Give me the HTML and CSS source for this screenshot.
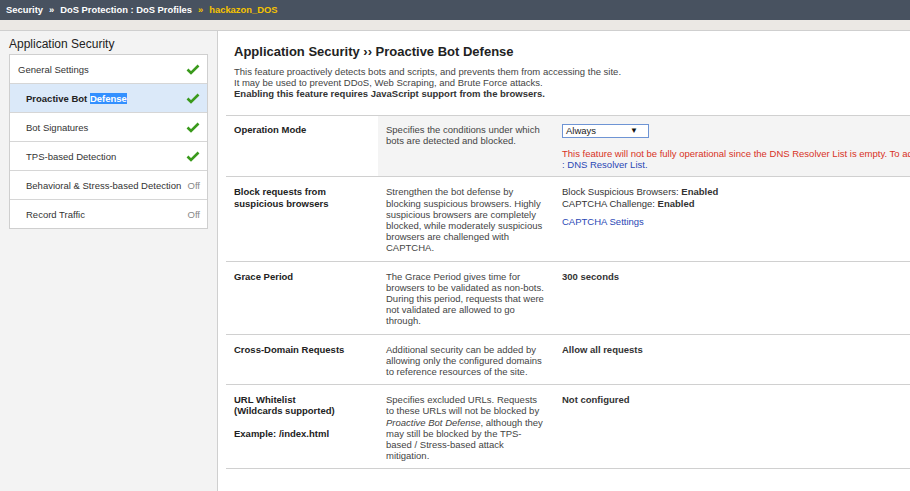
FILE: index.html
```html
<!DOCTYPE html>
<html>
<head>
<meta charset="utf-8">
<link rel="stylesheet" href="styles.css">
</head>
<body>
<div class="topbar">
  <span>Security</span><span class="sep">»</span><span>DoS Protection : DoS Profiles</span><span class="sep cur">»</span><span class="cur">hackazon_DOS</span>
</div>
<div class="band"></div>
<div class="layout">
  <aside class="sidebar">
    <h2 class="side-title">Application Security</h2>
    <ul class="nav">
      <li class="nav-item top"><span>General Settings</span><svg class="check" viewBox="0 0 14 11"><path d="M1.5 5.5 L5 9 L12.5 1.5" /></svg></li>
      <li class="nav-item sel"><span>Proactive Bot <span class="hl">Defense</span></span><svg class="check" viewBox="0 0 14 11"><path d="M1.5 5.5 L5 9 L12.5 1.5" /></svg></li>
      <li class="nav-item"><span>Bot Signatures</span><svg class="check" viewBox="0 0 14 11"><path d="M1.5 5.5 L5 9 L12.5 1.5" /></svg></li>
      <li class="nav-item"><span>TPS-based Detection</span><svg class="check" viewBox="0 0 14 11"><path d="M1.5 5.5 L5 9 L12.5 1.5" /></svg></li>
      <li class="nav-item"><span>Behavioral &amp; Stress-based Detection</span><span class="off">Off</span></li>
      <li class="nav-item"><span>Record Traffic</span><span class="off">Off</span></li>
    </ul>
  </aside>
  <main class="main">
    <h1 class="title">Application Security ›› Proactive Bot Defense</h1>
    <p class="intro">This feature proactively detects bots and scripts, and prevents them from accessing the site.<br>It may be used to prevent DDoS, Web Scraping, and Brute Force attacks.<br><b>Enabling this feature requires JavaScript support from the browsers.</b></p>
    <table class="props">
      <colgroup><col class="c-lbl"><col class="c-desc"><col class="c-val"></colgroup>
      <tr class="row op">
        <td class="lbl">Operation Mode</td>
        <td class="desc">Specifies the conditions under which bots are detected and blocked.</td>
        <td class="val">
          <div class="select"><span>Always</span><span class="arrow">▼</span></div>
          <div class="warn"><span class="red">This feature will not be fully operational since the DNS Resolver List is empty. To add a DNS Resolver, go to Network</span><br><a class="link">: DNS Resolver List.</a></div>
        </td>
      </tr>
      <tr class="row">
        <td class="lbl">Block requests from suspicious browsers</td>
        <td class="desc">Strengthen the bot defense by blocking suspicious browsers. Highly suspicious browsers are completely blocked, while moderately suspicious browsers are challenged with CAPTCHA.</td>
        <td class="val">Block Suspicious Browsers: <b>Enabled</b><br>CAPTCHA Challenge: <b>Enabled</b><div class="gap"><a class="link">CAPTCHA Settings</a></div></td>
      </tr>
      <tr class="row">
        <td class="lbl">Grace Period</td>
        <td class="desc">The Grace Period gives time for browsers to be validated as non-bots. During this period, requests that were not validated are allowed to go through.</td>
        <td class="val"><b>300 seconds</b></td>
      </tr>
      <tr class="row">
        <td class="lbl">Cross-Domain Requests</td>
        <td class="desc">Additional security can be added by allowing only the configured domains to reference resources of the site.</td>
        <td class="val"><b>Allow all requests</b></td>
      </tr>
      <tr class="row">
        <td class="lbl">URL Whitelist<br>(Wildcards supported)<br><br>Example: /index.html</td>
        <td class="desc">Specifies excluded URLs. Requests to these URLs will not be blocked by <i>Proactive Bot Defense</i>, although they may still be blocked by the TPS-based / Stress-based attack mitigation.</td>
        <td class="val"><b>Not configured</b></td>
      </tr>
    </table>
  </main>
</div>
</body>
</html>
```
FILE: styles.css
```css
html, body {
  margin: 0;
  padding: 0;
  height: 100%;
  overflow: hidden;
}
body {
  font-family: "Liberation Sans", Arial, sans-serif;
  font-size: 9.5px;
  color: #333;
  background: #fff;
}
.topbar {
  height: 20px;
  background: #485260;
  color: #fff;
  font-weight: bold;
  font-size: 9.4px;
  line-height: 20px;
  padding-left: 6px;
  white-space: nowrap;
}
.topbar .sep { margin: 0 6px; }
.topbar .cur { color: #f5c300; }
.band {
  height: 10px;
  background: #ebe8e4;
}
.layout {
  display: flex;
  border-top: 1px solid #cfcfcf;
  height: calc(100% - 31px);
}
.sidebar {
  width: 218px;
  box-sizing: border-box;
  flex: none;
  background: #f3f3f3;
  border-right: 1px solid #cfcfcf;
}
.side-title {
  margin: 0;
  padding: 6px 0 3px 9px;
  font-size: 12px;
  font-weight: normal;
  line-height: 14px;
  color: #222;
}
.nav {
  list-style: none;
  margin: 0 9px;
  padding: 0;
  background: #fff;
  border: 1px solid #cfcfcf;
}
.nav-item {
  height: 28px;
  display: flex;
  align-items: center;
  justify-content: space-between;
  padding: 0 7px 0 16px;
  border-top: 1px solid #d6d6d6;
  color: #333;
}
.nav-item:first-child { border-top: 0; }
.nav-item.top { padding-left: 8px; }
.nav-item.sel {
  background: #dbe9f9;
  font-weight: bold;
  color: #222;
}
.hl {
  background: #3390ff;
  color: #fff;
}
.check {
  width: 14px;
  height: 11px;
  fill: none;
  stroke: #3a9a1c;
  stroke-width: 2.6;
}
.off { color: #888; }
.main {
  flex: 1;
  min-width: 0;
  overflow: hidden;
  padding-left: 8px;
}
.title {
  margin: 0;
  padding: 13px 0 0 8px;
  font-size: 13px;
  line-height: 16px;
  color: #222;
}
.intro {
  margin: 6px 0 0 0;
  padding-left: 8px;
  line-height: 11px;
  color: #444;
}
.intro b { color: #333; }
.props {
  margin-top: 16px;
  border-collapse: collapse;
  table-layout: fixed;
  width: 100%;
  line-height: 11.2px;
}
.c-lbl { width: 152px; }
.c-desc { width: 176px; }
.row td {
  border-top: 1px solid #d0d0d0;
  border-bottom: 1px solid #d0d0d0;
  vertical-align: top;
  padding: 9px 8px 7px 8px;
}
.lbl {
  font-weight: bold;
  color: #222;
}
.desc { color: #444; }
.val { color: #333; }
.val b { color: #333; }
.op td { padding-top: 8px; padding-bottom: 6px; }
.op .desc, .op .val { background: #f4f4f4; }
.select {
  width: 82px;
  height: 12px;
  border: 1px solid #6e94d4;
  background: #fff;
  display: flex;
  justify-content: space-between;
  align-items: center;
  padding: 0 0 0 3px;
  font-size: 9.5px;
  line-height: 12px;
  color: #222;
}
.arrow { font-size: 8px; width: 18px; color: #111; }
.warn {
  margin-top: 10px;
  white-space: nowrap;
}
.red { color: #d8321e; }
.link { color: #2a47b5; }
.gap { margin-top: 7px; }
```
